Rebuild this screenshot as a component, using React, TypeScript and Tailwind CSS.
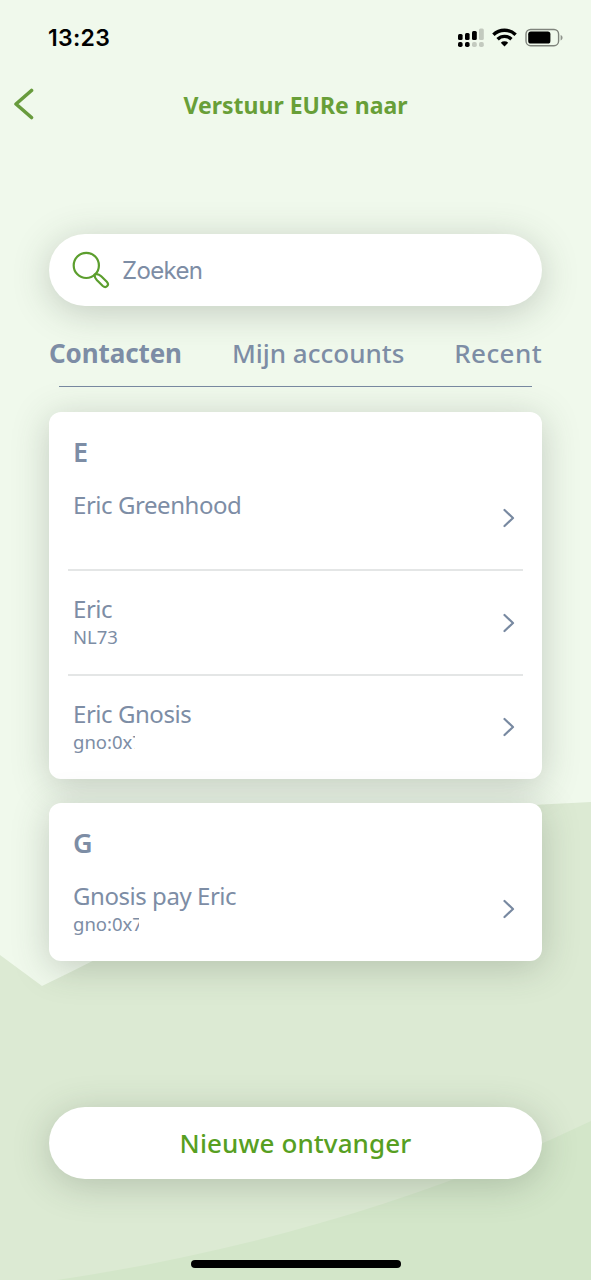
import React from 'react';
import clsx from 'clsx';

interface Contact {
  name: string;
  account?: string;
  accountClass?: string;
}

interface ContactGroup {
  letter: string;
  contacts: Contact[];
}

const groups: ContactGroup[] = [
  {
    letter: 'E',
    contacts: [
      { name: 'Eric Greenhood' },
      { name: 'Eric', account: 'NL73' },
      { name: 'Eric Gnosis', account: 'gno:0x7', accountClass: 'w-[62px]' },
    ],
  },
  {
    letter: 'G',
    contacts: [{ name: 'Gnosis pay Eric', account: 'gno:0x7', accountClass: 'w-[66px]' }],
  },
];

const Backdrop = () => (
  <svg className="absolute inset-0 -z-10" width="591" height="1280" viewBox="0 0 591 1280">
    <rect width="591" height="1280" fill="#f0f9ec" />
    <path d="M0 955L42 986C190 915 350 815 542 804.5L591 802V1280H0Z" fill="#dcead3" />
    <path d="M57 1280C250 1251 430 1198 591 1121V1280Z" fill="#d3e6c9" />
  </svg>
);

const StatusBar = () => (
  <div className="flex h-[76px] items-center justify-between pr-[28px] pl-[48px]">
    <span className="font-[Inter,sans-serif] text-[23px] leading-none font-semibold tracking-[0.3px] text-black">13:23</span>
    <svg width="106" height="22" viewBox="457 27 106 22">
      <g fill="#000">
        <rect x="458" y="34" width="4.6" height="6" rx="1.5" />
        <rect x="465" y="33" width="4.6" height="7" rx="1.5" />
        <rect x="472" y="31" width="4.8" height="9" rx="1.5" />
        <rect x="458" y="42" width="4.6" height="5" rx="1.8" />
        <rect x="465" y="42" width="4.6" height="5" rx="1.8" />
      </g>
      <g fill="#c3cabf">
        <rect x="479" y="28.5" width="4.8" height="11.5" rx="1.5" />
        <rect x="472" y="42" width="4.8" height="5" rx="1.8" />
        <rect x="479" y="42" width="4.8" height="5" rx="1.8" />
      </g>
      <g fill="none" stroke="#000" strokeWidth="3.4">
        <path d="M493.4 34.8A15.8 15.8 0 0 1 515.6 34.8" />
        <path d="M497.6 39.2A9.8 9.8 0 0 1 511.4 39.2" />
      </g>
      <path d="M500.8 42.8A5.4 5.4 0 0 1 508.2 42.8L504.5 46.4Z" fill="#000" />
      <rect x="526" y="29.5" width="32.6" height="16.2" rx="4.6" fill="none" stroke="#7f847c" strokeWidth="1.4" />
      <rect x="528.2" y="31.6" width="22.2" height="12" rx="2.6" fill="#000" />
      <path d="M560.6 35C563.2 36 563.2 39.4 560.6 40.4Z" fill="#8f948c" />
    </svg>
  </div>
);

const ContactRow: React.FC<{ contact: Contact; last: boolean }> = ({ contact, last }) => (
  <div className={clsx('mx-[19px] flex justify-between pr-[8px] pl-[5px]', last ? 'h-[103.5px]' : 'h-[104.5px] border-b-2 border-[#e4e6e6]')}>
    <div className="pt-[21px] whitespace-nowrap">
      <div className="text-[24px] leading-[34px] tracking-[-0.45px]">{contact.name}</div>
      {contact.account && (
        <div className={clsx('-mt-px overflow-hidden text-[18.5px] leading-[24px]', contact.accountClass)}>{contact.account}</div>
      )}
    </div>
    <svg className="mt-[41.5px]" width="12" height="20" viewBox="0 0 12 20" fill="none" stroke="#7889a1" strokeWidth="2.2" strokeLinecap="round" strokeLinejoin="round">
      <path d="M1.5 2L10 10L1.5 18" />
    </svg>
  </div>
);

const GroupCard: React.FC<{ group: ContactGroup }> = ({ group }) => (
  <section className="rounded-[12px] bg-white shadow-[0_6px_36px_rgba(60,70,60,0.25)]">
    <h2 className="h-[54.5px] pt-[22px] pl-[24px] text-[27px] leading-[36px] font-semibold">{group.letter}</h2>
    {group.contacts.map((contact, i) => (
      <ContactRow key={contact.name} contact={contact} last={i === group.contacts.length - 1} />
    ))}
  </section>
);

export default function App() {
  return (
    <div className="relative isolate flex h-[1280px] w-[591px] flex-col overflow-hidden font-['Noto_Sans',sans-serif] text-[#7d8da5]">
      <Backdrop />
      <StatusBar />

      <header className="flex h-[58px] items-center pl-[13px]">
        <svg width="22" height="34" viewBox="0 0 22 34" fill="none" stroke="#689b3d" strokeWidth="3.6" strokeLinecap="round" strokeLinejoin="round">
          <path d="M18.5 2.5L3 16L18.5 29.5" />
        </svg>
        <h1 className="flex-1 pr-[35px] text-center text-[23px] leading-none font-bold text-[#689f38]">Verstuur EURe naar</h1>
      </header>

      <main className="flex flex-1 flex-col px-[49px] pt-[100px]">
        <div className="flex h-[72px] shrink-0 items-center rounded-full bg-white pl-[23px] shadow-[0_6px_36px_rgba(60,70,60,0.25)]">
          <svg width="38" height="38" viewBox="0 0 38 38" fill="none" stroke="#5c9e2e" strokeWidth="2.2">
            <circle cx="14.3" cy="14.4" r="12.6" />
            <path d="M22.7 23.6C25.2 22.3 27.5 23.6 29.2 25.3L34.8 30.7C37.8 33.8 34.2 37.9 30.8 35L25.3 29.6C23.6 27.8 22 26.2 22.7 23.6Z" />
          </svg>
          <span className="ml-[12px] pt-[2px] font-[Inter,sans-serif] text-[24px] leading-none tracking-[-0.65px]">Zoeken</span>
        </div>

        <nav className="mt-[28px] flex h-[38px] shrink-0 items-center justify-between text-[26px] leading-none whitespace-nowrap">
          <span className="font-bold tracking-[-0.1px]">Contacten</span>
          <span className="font-medium">Mijn accounts</span>
          <span className="font-medium tracking-[0.4px]">Recent</span>
        </nav>
        <div className="mx-[10px] mt-[13.5px] h-[1.5px] shrink-0 bg-[#7889a1]" />

        <div className="mt-[25px] flex flex-col gap-6">
          {groups.map((group) => (
            <GroupCard key={group.letter} group={group} />
          ))}
        </div>

        <button className="mt-auto mb-[101px] h-[72px] w-full shrink-0 rounded-full bg-white text-[26px] font-medium tracking-[0.1px] text-[#579f22] shadow-[0_6px_36px_rgba(60,70,60,0.25)]">
          Nieuwe ontvanger
        </button>
      </main>

      <div className="absolute bottom-[12px] left-[191px] h-[8px] w-[210px] rounded-full bg-black" />
    </div>
  );
}
